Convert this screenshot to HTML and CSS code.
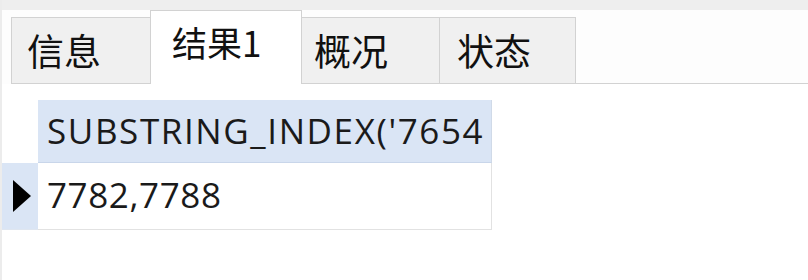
FILE: index.html
```html
<!DOCTYPE html>
<html lang="zh">
<head>
<meta charset="utf-8">
<link rel="stylesheet" href="styles.css">
</head>
<body>
<div class="window">
  <div class="topstrip"></div>
  <div class="tabbar">
    <div class="tab tab-info">信息</div>
    <div class="tab tab-active">结果1</div>
    <div class="tab tab-overview">概况</div>
    <div class="tab tab-status">状态</div>
    <div class="tab-fill"></div>
  </div>
  <div class="content">
    <div class="grid">
      <div class="corner"></div>
      <div class="hcell">SUBSTRING_INDEX('7654</div>
      <div class="indicator">
        <svg class="arrow" width="18" height="32" viewBox="0 0 18 32"><polygon points="0,0 18,16 0,32" fill="#000"/></svg>
      </div>
      <div class="dcell">7782,7788</div>
    </div>
  </div>
</div>
</body>
</html>
```
FILE: styles.css
```css
html, body {
  margin: 0;
  padding: 0;
  background: #ffffff;
}
body {
  width: 808px;
  height: 280px;
  overflow: hidden;
  font-family: "Open Sans", "Noto Sans CJK SC", sans-serif;
  color: #111;
}
.window {
  height: 280px;
  border-left: 2px solid #ececec;
  box-sizing: border-box;
}
.topstrip {
  height: 10px;
  background: #eeeeee;
}
.tabbar {
  display: flex;
  align-items: flex-end;
  height: 74px;
  padding-left: 9px;
  background: #fdfdfd;
}
.tab {
  box-sizing: border-box;
  height: 67px;
  border: 1px solid #d2d2d2;
  border-right: none;
  background: #f0f0f0;
  font-family: "Noto Sans CJK SC", sans-serif;
  font-size: 37px;
  line-height: 64px;
  padding-left: 15px;
  color: #111;
}
.tab-info { width: 139px; }
.tab-active {
  width: 152px;
  height: 74px;
  background: #ffffff;
  border-bottom: none;
  border-right: 1px solid #d2d2d2;
  padding-left: 21px;
  line-height: 62px;
  font-size: 35px;
}
.tab-overview { width: 137px; border-left: none; padding-left: 12px; }
.tab-status { width: 137px; border-right: 1px solid #d2d2d2; padding-left: 17px; }
.tab-fill {
  flex: 1;
  height: 1px;
  background: #d2d2d2;
}
.content {
  padding-top: 16px;
  background: #ffffff;
}
.grid {
  display: grid;
  grid-template-columns: 36px 454px;
  grid-template-rows: 63px 67px;
}
.corner {
  background: #ffffff;
}
.hcell {
  background: #dae5f5;
  border-right: 1px solid #d0dae8;
  border-bottom: 1px solid #c9d6ea;
  font-size: 35px;
  letter-spacing: 1.6px;
  line-height: 62px;
  padding-left: 9px;
  white-space: nowrap;
  overflow: hidden;
  color: #1a1a1a;
}
.indicator {
  background: #dae5f5;
  border-bottom: 1px solid #dfe6f0;
  display: flex;
  align-items: center;
  padding-left: 11px;
}
.dcell {
  background: #ffffff;
  border-right: 1px solid #e2e2e2;
  border-bottom: 1px solid #e2e2e2;
  font-size: 35px;
  letter-spacing: 0.6px;
  line-height: 64px;
  padding-left: 9px;
  color: #1a1a1a;
}
```
